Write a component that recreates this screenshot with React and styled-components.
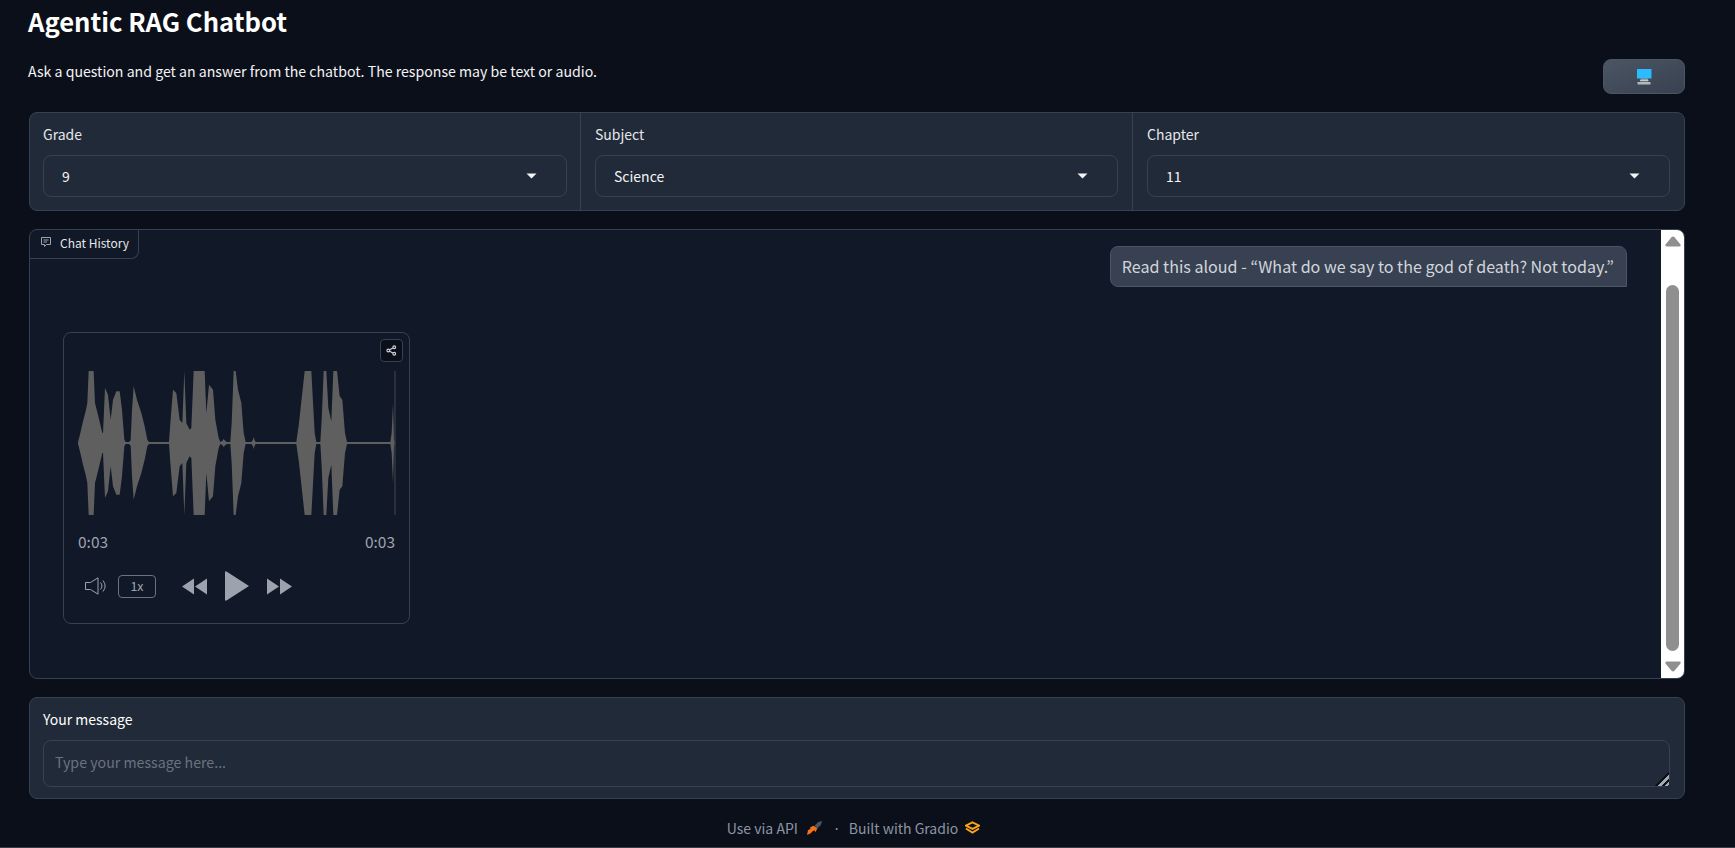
import styled, { createGlobalStyle } from "styled-components";

const GlobalStyle = createGlobalStyle`
  html, body {
    margin: 0;
    height: 100%;
    overflow: hidden;
    background: #0b0f19;
    color: #f3f4f6;
    font-family: "Noto Sans CJK JP", "Noto Sans", sans-serif;
  }
  * { box-sizing: border-box; }
`;

const Page = styled.div`
  height: 848px;
  display: flex;
  flex-direction: column;
  padding: 0 50px 0 29px;
  border-bottom: 1px solid #3a3d42;
`;

const Header = styled.header`
  height: 112px;
  display: flex;
  justify-content: space-between;
  align-items: flex-end;
  padding-bottom: 18px;
`;

const Intro = styled.div`
  align-self: flex-start;
  margin-left: -1px;
  padding-top: 4px;
`;

const Title = styled.h1`
  margin: 0 0 21px;
  font-size: 25.6px;
  line-height: 34px;
  font-weight: 600;
  color: #fff;
`;

const Subtitle = styled.p`
  margin: 0;
  font-size: 14.13px;
  line-height: 24px;
  color: #f3f4f6;
`;

const ThemeButton = styled.button`
  width: 82px;
  height: 35px;
  display: flex;
  align-items: center;
  justify-content: center;
  padding: 0;
  border: 1px solid #4b5563;
  border-radius: 8px;
  background: linear-gradient(to bottom right, #4b5563, #374151);
`;

const FilterPanel = styled.section`
  height: 99px;
  display: grid;
  grid-template-columns: 550px 552px 1fr;
  background: #212a38;
  border: 1px solid #374151;
  border-radius: 8px;
`;

const FilterCell = styled.div`
  padding: 11px 13px 0 13px;
  & + & {
    padding: 11px 14px 0 14px;
    border-left: 1px solid #374151;
  }
`;

const FieldLabel = styled.label`
  display: block;
  font-size: 14px;
  line-height: 20px;
  color: ${(p) => (p.$strong ? "#fff" : "#e5e7eb")};
  margin-bottom: 11px;
`;

const SelectBox = styled.div`
  height: 42px;
  display: flex;
  align-items: center;
  justify-content: space-between;
  padding: 0 29px 0 18px;
  border: 1px solid #374151;
  border-radius: 8px;
  font-size: 14px;
  color: #f3f4f6;
`;

const ChatPanel = styled.section`
  height: 450px;
  margin-top: 18px;
  display: flex;
  background: #111827;
  border: 1px solid #374151;
  border-radius: 8px;
  overflow: hidden;
`;

const ChatBody = styled.div`
  position: relative;
  flex: 1;
  padding: 16px 34px 0 33px;
  display: flex;
  flex-direction: column;
`;

const ChatTag = styled.div`
  position: absolute;
  top: 0;
  left: 0;
  width: 109px;
  height: 29px;
  display: flex;
  align-items: center;
  gap: 8px;
  padding: 0 0 4px 10px;
  font-size: 12px;
  color: #e5e7eb;
  border-right: 1px solid #374151;
  border-bottom: 1px solid #374151;
  border-bottom-right-radius: 8px;
`;

const Bubble = styled.div`
  align-self: flex-end;
  height: 41px;
  display: flex;
  align-items: center;
  padding: 0 12px 2px 11px;
  background: #374151;
  border: 1px solid #4b5563;
  border-radius: 8px 8px 0 8px;
  font-size: 16.1px;
  color: #d1d5db;
  white-space: nowrap;
`;

const AudioCard = styled.div`
  position: relative;
  width: 347px;
  height: 292px;
  margin-top: 45px;
  padding: 38px 14px 0;
  border: 1px solid #374151;
  border-radius: 8px;
`;

const ShareButton = styled.button`
  position: absolute;
  top: 6px;
  right: 6px;
  width: 23px;
  height: 23px;
  display: flex;
  align-items: center;
  justify-content: center;
  padding: 0;
  background: #0b0f19;
  border: 1px solid #374151;
  border-radius: 4px;
`;

const Waveform = styled.svg`
  display: block;
  width: 318px;
  height: 144px;
`;

const TimeRow = styled.div`
  display: flex;
  justify-content: space-between;
  margin-top: 15px;
  font-size: 15.5px;
  line-height: 22px;
  color: #9ca3af;
`;

const Controls = styled.div`
  display: flex;
  align-items: center;
  margin-top: 19px;
  padding-left: 7px;
`;

const RateBox = styled.div`
  width: 38px;
  height: 23px;
  margin: 0 26px 0 10px;
  padding-bottom: 1px;
  display: flex;
  align-items: center;
  justify-content: center;
  border: 1px solid #6b7280;
  border-radius: 4px;
  font-size: 12.5px;
  color: #9ca3af;
`;

const PlayIcon = styled.svg`
  margin: 0 18px;
`;

const ScrollTrack = styled.div`
  width: 23px;
  flex: none;
  display: flex;
  flex-direction: column;
  align-items: center;
  padding: 6px 0 4px;
  background: #fff;
`;

const ScrollThumb = styled.div`
  width: 13px;
  height: 366px;
  margin: 38px 0 10px;
  background: #8f8f8f;
  border-radius: 7px;
`;

const MessagePanel = styled.section`
  height: 102px;
  margin-top: 18px;
  padding: 11px 14px 11px 13px;
  background: #212a38;
  border: 1px solid #374151;
  border-radius: 8px;
`;

const MessageInput = styled.textarea`
  display: block;
  width: 100%;
  height: 47px;
  padding: 10px 11px;
  background: transparent;
  border: 1px solid #374151;
  border-radius: 8px;
  outline: none;
  resize: vertical;
  font: inherit;
  font-size: 14.2px;
  line-height: 22px;
  color: #f3f4f6;
  &::placeholder {
    color: #6b7280;
  }
  &::-webkit-resizer {
    background: linear-gradient(
      135deg,
      transparent 52%,
      #0b0f19 52% 62%,
      #a3a8b1 62% 76%,
      #0b0f19 76% 84%,
      #a3a8b1 84% 94%,
      transparent 94%
    );
  }
`;

const Footer = styled.footer`
  flex: 1;
  display: flex;
  align-items: center;
  justify-content: center;
  padding: 9px 7px 0 0;
  font-size: 14px;
  color: #8b95a5;
`;

const FooterDot = styled.span`
  margin: 0 8px 0 11px;
`;

const FooterIcon = styled.svg`
  margin-left: ${(p) => p.$gap}px;
`;

// half heights of the clip, read off the picture: [x, half height]
const ENVELOPE = [
  [85, 2], [92, 30], [100, 65], [108, 95], [113, 120], [117, 216], [132, 216], [136, 120],
  [145, 85], [158, 30], [160, 30], [166, 165], [175, 145], [183, 70], [190, 130],
  [200, 155], [210, 155], [217, 100], [224, 10], [228, 3], [238, 3], [243, 8],
  [247, 100], [252, 170], [262, 130], [275, 90], [285, 50], [293, 10], [298, 3],
  [358, 3], [362, 60], [370, 160], [380, 150], [390, 70], [398, 60], [404, 216],
  [410, 60], [420, 40], [425, 45], [432, 216], [465, 216], [470, 90], [478, 175],
  [490, 160], [497, 70], [507, 15], [512, 3], [518, 6], [522, 12], [527, 6],
  [532, 3], [542, 3], [546, 60], [552, 216], [558, 216], [565, 160], [575, 120],
  [582, 30], [588, 3], [605, 3], [610, 10], [612, 18], [615, 8], [618, 3],
  [740, 3], [748, 60], [765, 216], [785, 216], [795, 30], [800, 3], [812, 3],
  [816, 70], [822, 216], [830, 216], [836, 105], [845, 65], [851, 216], [862, 216],
  [870, 140], [878, 130], [886, 30], [892, 3], [1022, 3], [1026, 30], [1030, 120],
  [1033, 10], [1035, 1],
];

const wavePoints = [
  ...ENVELOPE.map(([x, h]) => `${x},${216 - h}`),
  ...[...ENVELOPE].reverse().map(([x, h]) => `${x},${216 + h}`),
].join(" ");

const Arrow = () => (
  <svg width="11" height="6" viewBox="0 0 11 6">
    <path d="M0.5 0.5h10L5.5 5.5z" fill="#f3f4f6" />
  </svg>
);

const Select = ({ label, value }) => (
  <FilterCell>
    <FieldLabel>{label}</FieldLabel>
    <SelectBox>
      {value}
      <Arrow />
    </SelectBox>
  </FilterCell>
);

const ScrollArrow = ({ down }) => (
  <svg width="16" height="11" viewBox="0 0 16 11" style={down ? { transform: "scaleY(-1)" } : undefined}>
    <path d="M6.500 1.300Q8 -0.300 9.500 1.300L15.300 8.300Q16.500 10.500 14 10.500H2Q-0.500 10.500 0.700 8.300Z" fill="#8f8f8f" />
  </svg>
);

const App = () => (
  <>
    <GlobalStyle />
    <Page>
      <Header>
        <Intro>
          <Title>Agentic RAG Chatbot</Title>
          <Subtitle>Ask a question and get an answer from the chatbot. The response may be text or audio.</Subtitle>
        </Intro>
        <ThemeButton>
          <svg width="16" height="16" viewBox="0 0 16 16">
            <rect x="1" y="0" width="14.5" height="9.5" fill="#2bbcff" />
            <rect x="4.500" y="9.500" width="7.500" height="3" fill="#9aa0a8" />
            <rect x="4" y="11" width="8.500" height="1" fill="#c6c9cd" />
            <rect x="1.500" y="13" width="13" height="2.500" rx="0.500" fill="#b4b7bb" />
          </svg>
        </ThemeButton>
      </Header>

      <FilterPanel>
        <Select label="Grade" value="9" />
        <Select label="Subject" value="Science" />
        <Select label="Chapter" value="11" />
      </FilterPanel>

      <ChatPanel>
        <ChatBody>
          <ChatTag>
            <svg width="12" height="12" viewBox="0 0 24 24" fill="none" stroke="#9ca3af" strokeWidth="2">
              <path d="M3 3h18v14h-8l-4 4v-4H3z" />
              <path d="M7 8h10M7 12h7" />
            </svg>
            Chat History
          </ChatTag>
          <Bubble>Read this aloud - “What do we say to the god of death? Not today.”</Bubble>
          <AudioCard>
            <ShareButton>
              <svg width="11" height="11" viewBox="0 0 24 24" fill="none" stroke="#d1d5db" strokeWidth="2.400">
                <circle cx="18" cy="5" r="3" />
                <circle cx="5" cy="12" r="3" />
                <circle cx="18" cy="19" r="3" />
                <path d="M8 10.500l7-4M8 13.500l7 4" />
              </svg>
            </ShareButton>
            <Waveform viewBox="85 0 954 432" preserveAspectRatio="none">
              <polygon points={wavePoints} fill="#5f5f5f" />
              <rect x="1035" y="0" width="2" height="432" fill="#5f5f5f" />
            </Waveform>
            <TimeRow>
              <span>0:03</span>
              <span>0:03</span>
            </TimeRow>
            <Controls>
              <svg width="23" height="18" viewBox="0 0 23 18" fill="none" stroke="#9ca3af" strokeWidth="1">
                <path d="M0.500 5.500h5L13 0.800v16.400L5.500 12.500h-5z" />
                <path d="M15.500 5.500a5 5 0 0 1 0 7" />
                <path d="M18 3.500a9 9 0 0 1 0 11" />
              </svg>
              <RateBox>1x</RateBox>
              <svg width="25" height="17" viewBox="0 0 25 17" fill="#9ca3af">
                <path d="M0 8.500L12 0.500v16z" />
                <path d="M13 8.500L25 0.500v16z" />
              </svg>
              <PlayIcon width="24" height="30" viewBox="0 0 24 30" fill="#9ca3af">
                <path d="M0 1.500a1 1 0 0 1 1.500-1L24 15 1.500 29.500a1 1 0 0 1-1.500-1z" />
              </PlayIcon>
              <svg width="25" height="17" viewBox="0 0 25 17" fill="#9ca3af">
                <path d="M0 0.500L12 8.500L0 16.500z" />
                <path d="M13 0.500L25 8.500L13 16.500z" />
              </svg>
            </Controls>
          </AudioCard>
        </ChatBody>
        <ScrollTrack>
          <ScrollArrow />
          <ScrollThumb />
          <ScrollArrow down />
        </ScrollTrack>
      </ChatPanel>

      <MessagePanel>
        <FieldLabel $strong>Your message</FieldLabel>
        <MessageInput placeholder="Type your message here..." />
      </MessagePanel>

      <Footer>
        Use via API
        <FooterIcon $gap={9} width="15" height="14" viewBox="0 0 16 15">
          <path d="M8 5l4-4 4-1-1 4-4 4z" fill="#4b5563" />
          <path d="M7 5l4 3-2 4-1-2-2 1-2 2-4 2 1-5 3-2-1-1z" fill="#f97316" />
        </FooterIcon>
        <FooterDot>·</FooterDot>
        Built with Gradio
        <FooterIcon $gap={7} width="15" height="13" viewBox="0 0 16 13" fill="none" stroke="#f9a51a" strokeWidth="2">
          <path d="M8 1l7 3.500L8 8 1 4.500z" />
          <path d="M1 7.500L8 12l7-4.500" />
        </FooterIcon>
      </Footer>
    </Page>
  </>
);

export default App;
